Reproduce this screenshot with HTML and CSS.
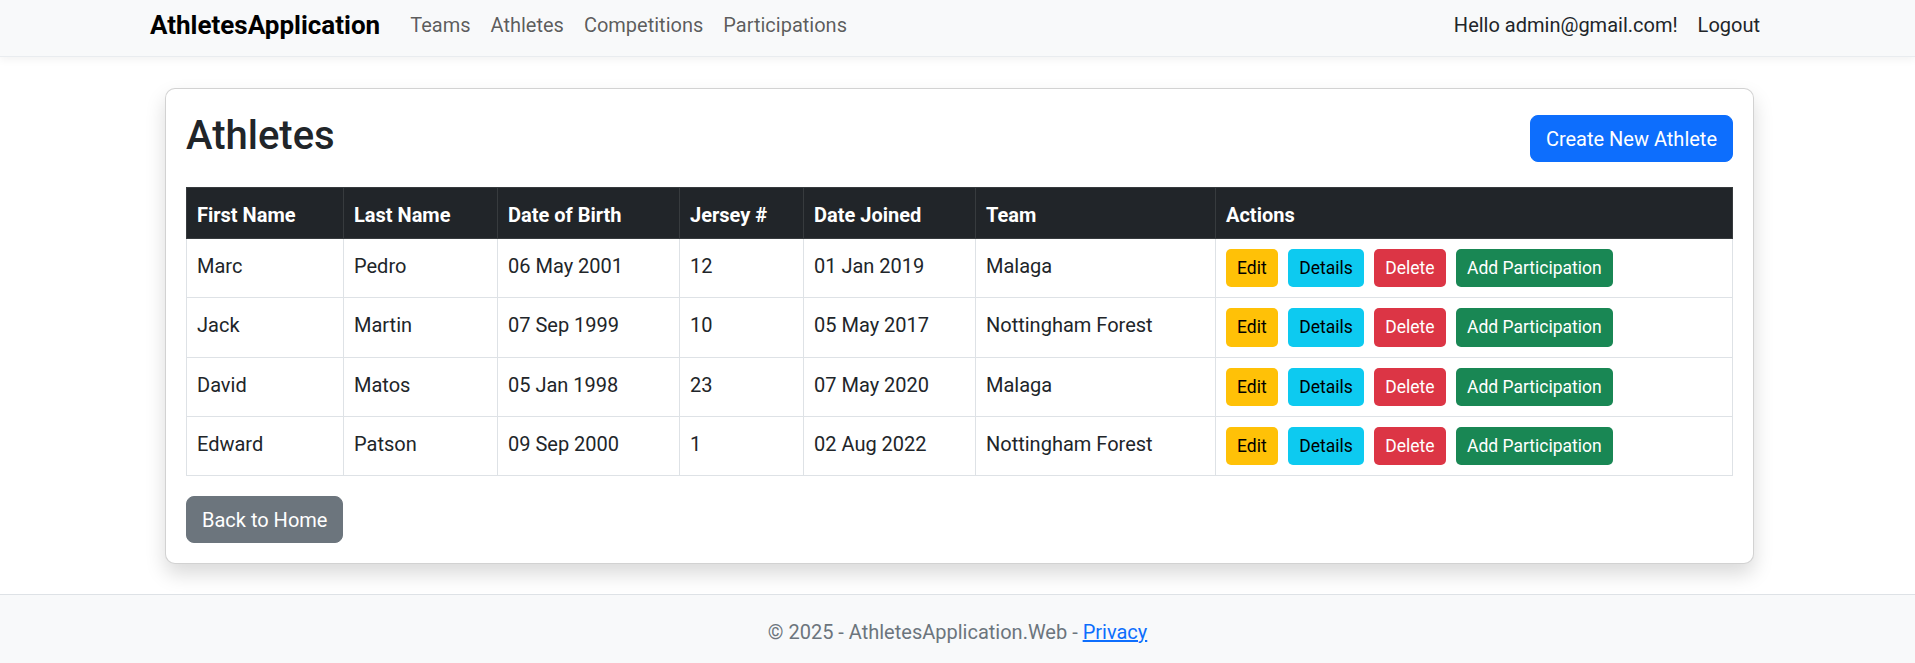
FILE: index.html
```html
<!DOCTYPE html>
<html lang="en">
<head>
<meta charset="utf-8">
<title>Athletes - AthletesApplication</title>
<link rel="stylesheet" href="styles.css">
</head>
<body>
<header class="topbar">
  <nav class="navbar">
    <a class="brand" href="#">AthletesApplication</a>
    <ul class="nav-links">
      <li><a href="#">Teams</a></li>
      <li><a href="#">Athletes</a></li>
      <li><a href="#">Competitions</a></li>
      <li><a href="#">Participations</a></li>
    </ul>
    <ul class="nav-user">
      <li><span class="hello">Hello admin@gmail.com!</span></li>
      <li><a href="#">Logout</a></li>
    </ul>
  </nav>
</header>

<main class="page">
  <section class="card">
    <div class="card-head">
      <h2 class="title">Athletes</h2>
      <a class="btn btn-primary" href="#">Create New Athlete</a>
    </div>

    <table class="table">
      <colgroup>
        <col class="c1"><col class="c2"><col class="c3"><col class="c4"><col class="c5"><col class="c6"><col class="c7">
      </colgroup>
      <thead>
        <tr>
          <th>First Name</th>
          <th>Last Name</th>
          <th>Date of Birth</th>
          <th>Jersey #</th>
          <th>Date Joined</th>
          <th>Team</th>
          <th>Actions</th>
        </tr>
      </thead>
      <tbody>
        <tr>
          <td>Marc</td><td>Pedro</td><td>06 May 2001</td><td>12</td><td>01 Jan 2019</td><td>Malaga</td>
          <td class="act"><div class="actions"><a class="btn-sm warn" href="#">Edit</a><a class="btn-sm info" href="#">Details</a><a class="btn-sm danger" href="#">Delete</a><a class="btn-sm success" href="#">Add Participation</a></div></td>
        </tr>
        <tr>
          <td>Jack</td><td>Martin</td><td>07 Sep 1999</td><td>10</td><td>05 May 2017</td><td>Nottingham Forest</td>
          <td class="act"><div class="actions"><a class="btn-sm warn" href="#">Edit</a><a class="btn-sm info" href="#">Details</a><a class="btn-sm danger" href="#">Delete</a><a class="btn-sm success" href="#">Add Participation</a></div></td>
        </tr>
        <tr>
          <td>David</td><td>Matos</td><td>05 Jan 1998</td><td>23</td><td>07 May 2020</td><td>Malaga</td>
          <td class="act"><div class="actions"><a class="btn-sm warn" href="#">Edit</a><a class="btn-sm info" href="#">Details</a><a class="btn-sm danger" href="#">Delete</a><a class="btn-sm success" href="#">Add Participation</a></div></td>
        </tr>
        <tr>
          <td>Edward</td><td>Patson</td><td>09 Sep 2000</td><td>1</td><td>02 Aug 2022</td><td>Nottingham Forest</td>
          <td class="act"><div class="actions"><a class="btn-sm warn" href="#">Edit</a><a class="btn-sm info" href="#">Details</a><a class="btn-sm danger" href="#">Delete</a><a class="btn-sm success" href="#">Add Participation</a></div></td>
        </tr>
      </tbody>
    </table>

    <a class="btn btn-secondary" href="#">Back to Home</a>
  </section>
</main>

<footer class="footer">
  &copy; 2025 - AthletesApplication.Web - <a href="#">Privacy</a>
</footer>
</body>
</html>
```

FILE: styles.css
```css
* { box-sizing: border-box; }

html, body {
  margin: 0;
  padding: 0;
}

body {
  font-family: Roboto, "Liberation Sans", Arial, sans-serif;
  font-size: 20px;
  line-height: 30px;
  color: #212529;
  background: #ffffff;
  min-height: 663px;
  display: flex;
  flex-direction: column;
}

a { text-decoration: none; }

/* ---------- navbar ---------- */
.topbar {
  background: #f8f9fa;
  border-bottom: 1px solid #e9ecef;
  box-shadow: 0 3px 8px rgba(0, 0, 0, 0.05);
}

.navbar {
  width: 1650px;
  margin: 0 auto;
  padding: 0 12.5px 7px 17.5px;
  height: 56px;
  display: flex;
  align-items: center;
}

.brand {
  font-size: 26px;
  font-weight: 700;
  color: #000;
  margin-right: 20px;
}

.nav-links, .nav-user {
  list-style: none;
  margin: 0;
  padding: 0;
  display: flex;
}

.nav-links { flex: 1; }

.nav-links a {
  display: block;
  padding: 0 10px;
  color: rgba(0, 0, 0, 0.65);
}

.nav-user a, .nav-user .hello {
  display: block;
  padding: 0 10px;
  color: #212529;
}

/* ---------- main ---------- */
.page {
  padding: 31px 161px 0 165px;
}

.card {
  background: #fff;
  border: 1px solid rgba(0, 0, 0, 0.175);
  border-radius: 10px;
  box-shadow: 0 10px 20px rgba(0, 0, 0, 0.15);
  padding: 20px;
}

.card-head {
  display: flex;
  align-items: center;
  justify-content: space-between;
  margin-bottom: 20px;
}

.title {
  margin: 0 0 7px;
  padding-top: 3px;
  font-size: 40px;
  line-height: 48px;
  font-weight: 500;
}

.btn {
  display: inline-block;
  font-size: 20px;
  line-height: 30px;
  padding: 8px 15px 7px;
  border: 1px solid transparent;
  border-radius: 8px;
  color: #fff;
}

.btn-primary { background: #0d6efd; border-color: #0d6efd; }
.btn-secondary { background: #6c757d; border-color: #6c757d; }

/* ---------- table ---------- */
.table {
  width: 100%;
  table-layout: fixed;
  border-collapse: collapse;
  margin-bottom: 20px;
}

.c1 { width: 157px; }
.c2 { width: 154px; }
.c3 { width: 182px; }
.c4 { width: 124px; }
.c5 { width: 172px; }
.c6 { width: 240px; }
.c7 { width: auto; }

.table th {
  background: #212529;
  color: #fff;
  font-weight: 700;
  text-align: left;
  padding: 12px 10px 8px;
  border: 1px solid #373b3e;
}

.table td {
  padding: 12px 10px 8px;
  border: 1px solid #dee2e6;
  vertical-align: top;
}

.table td.act {
  padding: 10px 10px;
}

.actions {
  display: flex;
  gap: 10.5px;
}

.btn-sm {
  display: inline-block;
  font-size: 17.5px;
  line-height: 26.25px;
  padding: 5px 10px;
  border: 1px solid transparent;
  border-radius: 5px;
  white-space: nowrap;
}

.warn { background: #ffc107; color: #000; }
.info { background: #0dcaf0; color: #000; }
.danger { background: #dc3545; color: #fff; }
.success { background: #198754; color: #fff; }

/* ---------- footer ---------- */
.footer {
  margin-top: auto;
  border-top: 1px solid #dee2e6;
  background: #f8f9fa;
  color: #6c757d;
  text-align: center;
  padding: 22px 0 16px;
  white-space: nowrap;
}

.footer a {
  color: #0d6efd;
  text-decoration: underline;
}
```
